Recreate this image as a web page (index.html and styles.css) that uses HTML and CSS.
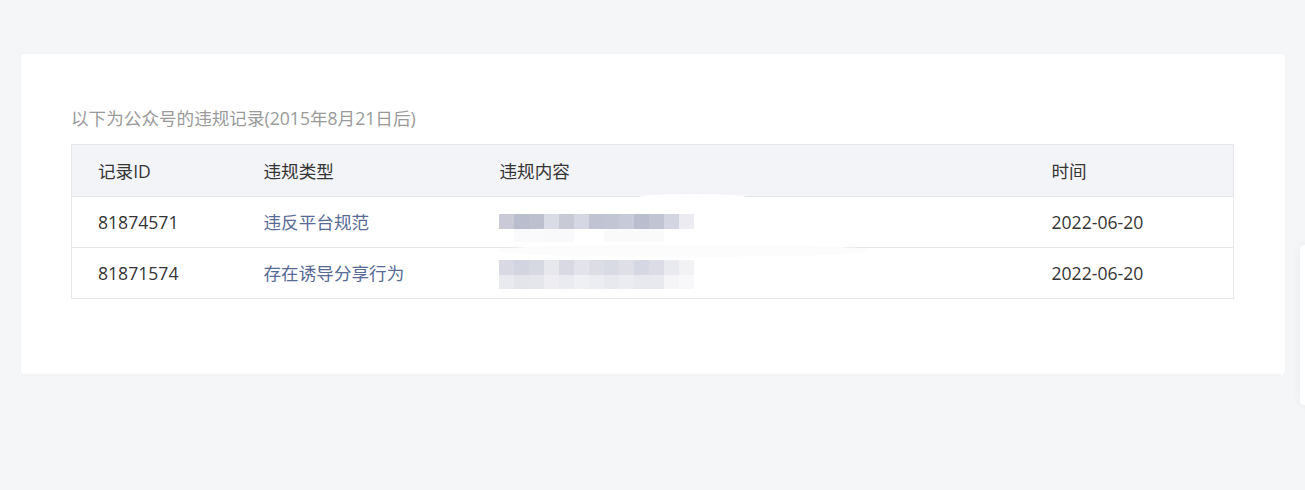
FILE: index.html
```html
<!DOCTYPE html>
<html lang="zh-CN">
<head>
<meta charset="utf-8">
<title>违规记录</title>
<link rel="stylesheet" href="styles.css">
</head>
<body>
<main class="page">
  <section class="card">
    <h2 class="title">以下为公众号的违规记录(2015年8月21日后)</h2>
    <div class="table-wrap">
      <table class="records">
        <colgroup>
          <col class="c-id">
          <col class="c-type">
          <col class="c-content">
          <col class="c-time">
        </colgroup>
        <thead>
          <tr>
            <th>记录ID</th>
            <th>违规类型</th>
            <th>违规内容</th>
            <th>时间</th>
          </tr>
        </thead>
        <tbody>
          <tr>
            <td>81874571</td>
            <td class="type">违反平台规范</td>
            <td class="blur"><div class="mosaic m1a"></div><div class="mosaic m1b"></div></td>
            <td>2022-06-20</td>
          </tr>
          <tr>
            <td>81871574</td>
            <td class="type">存在诱导分享行为</td>
            <td class="blur"><div class="mosaic m2a"></div><div class="mosaic m2b"></div></td>
            <td>2022-06-20</td>
          </tr>
        </tbody>
      </table>
      <div class="smear smear-1"></div>
      <div class="smear smear-2"></div>
    </div>
  </section>
</main>
<aside class="side-panel"></aside>
</body>
</html>
```

FILE: styles.css
```css
html, body {
  margin: 0;
  padding: 0;
}
body {
  background: #f5f6f8;
  font-family: "Open Sans", "Noto Sans CJK SC", sans-serif;
  color: #353535;
  width: 1305px;
  height: 490px;
  overflow: hidden;
  position: relative;
}
.page {
  padding: 54px 20px 0 21px;
}
.card {
  width: 1264px;
  height: 320px;
  box-sizing: border-box;
  background: #fff;
  border-radius: 4px;
  box-shadow: 0 0 3px rgba(0, 0, 0, 0.04);
  padding: 50px 50px 0 50px;
}
.title {
  margin: 0 0 12px 0;
  font-size: 17.6px;
  font-weight: normal;
  line-height: 28px;
  height: 28px;
  color: #9a9a9a;
}
.table-wrap {
  position: relative;
  width: 1162px;
}
.records {
  width: 1162px;
  border-collapse: collapse;
  table-layout: fixed;
  border: 1px solid #e7e7eb;
  font-size: 17.6px;
}
.c-id { width: 166px; }
.c-type { width: 236px; }
.c-content { width: 552px; }
.c-time { width: 208px; }
.records th,
.records td {
  box-sizing: border-box;
  text-align: left;
  font-weight: normal;
  padding: 0 0 0 26px;
  height: 51px;
  line-height: 24px;
  vertical-align: middle;
  border-bottom: 1px solid #e7e7eb;
  color: #353535;
  white-space: nowrap;
}
.records thead th {
  background: #f3f4f8;
  height: 52px;
}
.records td.type {
  color: #576b95;
}
.records td.blur {
  padding-left: 25px;
  vertical-align: top;
}
.mosaic {
  width: 195px;
  height: 15px;
}
.records tr:first-child td.blur { padding-top: 17px; }
.records tr:last-child td.blur { padding-top: 12px; }
.m1a {
  background: linear-gradient(90deg,
    #c9cad6 0 15px, #b9bdcd 15px 30px, #bcc0cf 30px 45px, #d9dbe5 45px 60px,
    #c8cad6 60px 75px, #d5d7e2 75px 90px, #c0c3d2 90px 105px, #c2c5d4 105px 120px,
    #c7cad8 120px 135px, #b9bdcd 135px 150px, #c0c4d3 150px 165px, #d3d5e0 165px 180px,
    #ebebf1 180px 195px);
}
.m1b {
  height: 13px;
  background: linear-gradient(90deg,
    #ffffff 0 15px, #fafafc 15px 45px, #f9f9fb 45px 75px, #ffffff 75px 105px,
    #fafafb 105px 165px, #ffffff 165px 195px);
}
.m2a {
  background: linear-gradient(90deg,
    #d8d9e2 0 15px, #d2d5df 15px 30px, #d7d9e2 30px 45px, #e7e8ee 45px 60px,
    #d8d9e2 60px 75px, #e3e4eb 75px 90px, #dcdde5 90px 105px, #d9dbe4 105px 120px,
    #dedfe7 120px 135px, #d5d7e2 135px 150px, #dbdce5 150px 165px, #e9eaef 165px 180px,
    #f2f2f5 180px 195px);
}
.m2b {
  height: 14px;
  background: linear-gradient(90deg,
    #e9eaef 0 15px, #e4e5eb 15px 30px, #e5e6ec 30px 45px, #ededf2 45px 60px,
    #eaebf0 60px 75px, #eff0f4 75px 90px, #ecedf2 90px 105px, #e8e9ef 105px 120px,
    #ebecf1 120px 135px, #e8e9ef 135px 165px, #f5f5f8 165px 180px,
    #f8f8fa 180px 195px);
}
.smear {
  position: absolute;
  background: rgba(255, 255, 255, 0.92);
  border-radius: 50%;
}
.smear-1 {
  left: 569px;
  top: 50px;
  width: 105px;
  height: 5px;
}
.smear-2 {
  left: 427px;
  top: 101px;
  width: 370px;
  height: 12px;
  background: rgba(252, 252, 253, 0.96);
  border-radius: 40% 40% 50% 50%;
}
.side-panel {
  position: absolute;
  left: 1300px;
  top: 245px;
  width: 40px;
  height: 160px;
  background: #fff;
  border-radius: 4px 0 0 4px;
  box-shadow: 0 0 8px rgba(0, 0, 0, 0.06);
}
```
